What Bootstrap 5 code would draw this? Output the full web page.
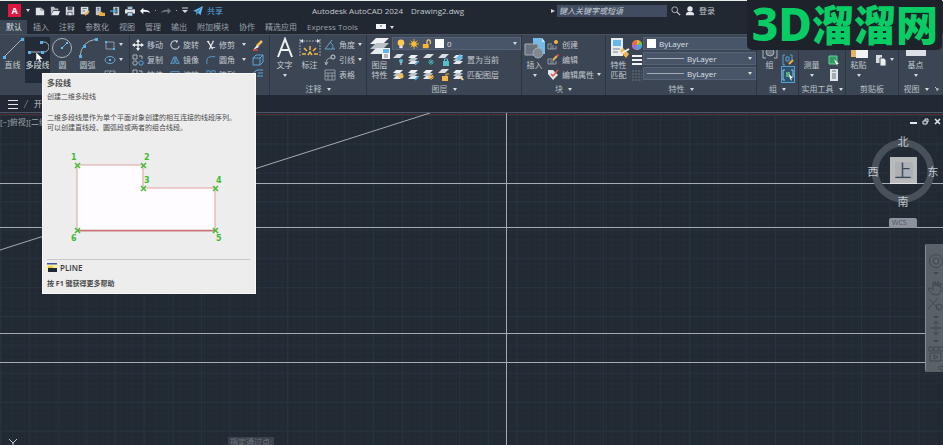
<!DOCTYPE html>
<html lang="zh-CN">
<head>
<meta charset="utf-8">
<meta name="viewport" content="width=device-width, initial-scale=1">
<title>Autodesk AutoCAD 2024 - Drawing2.dwg</title>
<link href="https://cdn.jsdelivr.net/npm/bootstrap@5.3.0/dist/css/bootstrap.min.css" rel="stylesheet">
<style>
body{font-family:"Open Sans","Noto Sans CJK SC",sans-serif;font-size:8px;line-height:10px;color:#c3c9cf;background:#222933;overflow:hidden}
button,.ribbon a{background:none;border:0;padding:0;color:inherit;font-size:8px;line-height:10px;text-decoration:none;white-space:nowrap}
svg{display:block;flex:none}
.i9{width:10px;height:10px}.i12{width:12px;height:12px}.i24{width:22px;height:22px}
.titlebar{display:grid;grid-template-columns:312fr 239fr 392fr;height:20px;border-top:1px solid #e4efe9;background:#222832}
.qat{gap:5px;padding-left:8px}
.logo{background:#df1740;color:#fff;width:13px;height:13px;font-weight:700;font-size:9px;line-height:13px;text-align:center}
.tri{width:0;height:0;border:2px solid transparent;border-top:3px solid #d6dade;border-bottom:0;flex:none}
.dot{width:1px;height:1px;background:#99a1aa}
.share{color:#51a4dd}
.search{width:110px;height:12px;background:#414c60;border:0;color:#c6ccd4;font-size:8px;font-style:italic;padding:0 2px;border-radius:0}
.search::placeholder{color:#c6ccd4}
.tabs{height:14px;gap:10px;background:#222832;color:#9aa2ab}
.tabs a{color:inherit;text-decoration:none;line-height:14px;white-space:nowrap}
.tabs a.active{background:#3b4553;color:#dce0e4;padding:0 5px 0 6px;margin-right:-4px}
.ribbon{display:grid;grid-template-columns:130fr 140fr 97fr 155fr 84fr 151fr 42fr 47fr 53fr 44fr;background:#3b4553;border-top:1px solid #46505e;height:61px}
.panel{min-width:0;border-right:1px solid #2c3541;display:flex;flex-direction:column}
.tools{height:48px;padding-top:2px;display:flex;overflow:hidden}
.foot{height:12px;gap:5px;color:#b9c0c7}
.big{display:flex;flex-direction:column;align-items:center;width:25px;height:46px;flex:none}
.big .i24{margin-bottom:1px}
.big.on{background:#222b37;color:#dde2e6}
.stack{display:grid;grid-template-rows:repeat(3,15px);row-gap:0;min-width:0}
.line{display:flex;align-items:center;gap:3px;height:15px}
.mod{display:grid;grid-template-columns:38px 36px 46px 12px;grid-auto-rows:15px;padding-left:2px}
.note{padding-left:2px}
.note .stack{padding-left:2px}
.drop{display:flex;align-items:center;height:13px;background:#485468;border:1px solid #566277;padding:0 3px;gap:3px;min-width:0}
.drop select{appearance:none;background:none;border:0;color:#dce1e6;font-size:8px;line-height:10px;padding:0;flex:1;min-width:0}
.sw{width:9px;height:9px;background:#fff;flex:none}
.rule{width:37px;height:1px;background:#a6afb9;flex:none}
.hot{outline:1px solid #55a0d2;background:#2c5471}
.files{height:17px;background:#222934;padding-left:8px;gap:5px}
.files span{color:#68727e}
.canvas{position:relative;min-height:0;border-top:1px solid #4a5664;background:#212932;overflow:hidden}
.model{width:100%;height:100%}
.over{position:absolute}
.viewname{left:0;top:4px;color:#9ba4aa;width:42px;overflow:hidden;white-space:nowrap}
.win{right:2px;top:5px;gap:5px}
.cube{right:2px;top:21px}
.cube text{font-family:"Liberation Serif","Noto Sans CJK SC",serif}
.navi{right:0;top:131px;width:18px;height:128px;background:#5b6168;color:#41484f;border-left:1px solid #858b90;border-radius:2px 0 0 2px}
.wcs{right:26px;top:105px;width:28px;height:10px;background:#8d939d;color:#4f5864;border-radius:2px;padding-left:3px;font-size:7px}
.prompt{left:228px;bottom:-2px;background:#3a414b;color:#6d747d;padding:0 2px}
.tip{left:42px;top:73px;width:214px;height:221px;background:#ededed;color:#4b4b4b;padding:4px 5px 4px 4px;border:1px solid #f8f8f8;font-size:7px;z-index:4;line-height:10px}
.tip h1{font-size:8px;line-height:10px;font-weight:700;margin:0 0 4px}
.tip p{margin:0;white-space:nowrap}
.tip .desc{margin-top:11px}
.tip .cmd{border-top:1px solid #c8c8c8;font-size:8px;font-weight:600;height:16px;gap:3px;color:#3a3a3a}
.brand{right:1px;top:0;height:50px;padding:0 4px 0 5px;background:#1d222b;border-radius:0 0 5px 5px;color:#08cd65;font-family:"Noto Sans","Noto Sans CJK SC",sans-serif;font-weight:900;font-size:42px;line-height:50px;z-index:5;white-space:nowrap}
.brand b{font-size:46px;font-weight:800;line-height:40px}
.pointer{left:36px;top:52px;z-index:6}
</style>
<script src="https://cdn.jsdelivr.net/npm/bootstrap@5.3.0/dist/js/bootstrap.bundle.min.js"></script>
</head>
<body class="vh-100 d-flex flex-column">
<svg width="0" height="0" class="position-absolute" aria-hidden="true">
<defs>
<g id="stackg"><path d="M4 1h7L8 4H1z" fill="#eef1f3"/><path d="M4 4h7L8 7H1z" fill="#b8c1c9"/><path d="M4 7h7L8 10H1z" fill="#e4e8eb"/></g>
<symbol id="bulb" viewBox="0 0 12 12"><circle cx="6" cy="4.5" r="4" fill="#ffc94f"/><path d="M4 8h4v3H4z" fill="#e2e5e7"/></symbol>
<symbol id="sun" viewBox="0 0 12 12"><circle cx="6" cy="6" r="3.2" fill="#ffb92d"/><path d="M6 0v12M0 6h12M2 2l8 8M10 2l-8 8" stroke="#ffb92d"/></symbol>
<symbol id="lock" viewBox="0 0 12 12"><path d="M1 6h7v5H1z" fill="#ffb62f"/><path d="M6 6V3q0-2 2-2t2 2v3" fill="none" stroke="#ffd078" stroke-width="1.4"/></symbol>
<symbol id="blk" viewBox="0 0 12 12"><path d="M1 5h4M1 5v5h8V7M3 7h4M3 9h4" fill="none" stroke="#929ca6"/><circle cx="9" cy="3" r="2" fill="#f3b640"/></symbol>
<symbol id="blked" viewBox="0 0 12 12"><path d="M1 5h4M1 5v5h8V7M3 7h4M3 9h4" fill="none" stroke="#929ca6"/><path d="M6 6l4-4" stroke="#f0b452" stroke-width="2"/><path d="M10 2l1.5-1.5" stroke="#e14e44" stroke-width="2"/></symbol>
<symbol id="brush" viewBox="0 0 12 12"><path d="M5 7l5-5" stroke="#f6bc51" stroke-width="2.5"/><path d="M1 11l4-5 2 2z" fill="#f4eee5"/><path d="M1 11h5" stroke="#e3493f" stroke-width="1.5"/></symbol>
<symbol id="paper" viewBox="0 0 12 12"><path d="M1 2h6l4 3v6H1z" fill="#dfe3e6"/><path d="M7 2v3h4" fill="none" stroke="#78818b"/></symbol>
<symbol id="floppy" viewBox="0 0 12 12"><path d="M1 1h10v10H1z" fill="#d7dce0"/><path d="M3 1h6v4H3zM3 7h6v4H3z" fill="#4c5663"/><path d="M4 8h4v3H4z" fill="#e8ebed"/></symbol>
<symbol id="undo" viewBox="0 0 12 12"><path d="M0 6l4-4v2.500q7 0 8 4-3-2-8-1.500V10z" fill="currentColor"/></symbol>
<symbol id="refresh" viewBox="0 0 12 12"><path d="M7 1A5 5 0 1 0 11 7" fill="none" stroke="#c6cfd6" stroke-width="1.300"/><path d="M6 0l4 1-2 3z" fill="#c6cfd6"/></symbol>
<symbol id="copyi" viewBox="0 0 12 12"><path d="M1 1h4v4H1zM7 2h3v3" fill="none" stroke="#abb5be"/><circle cx="3" cy="9" r="2.200" fill="none" stroke="#abb5be"/><circle cx="9" cy="9" r="2.200" fill="none" stroke="#55a9df"/></symbol>
<symbol id="boxi" viewBox="0 0 12 12"><path d="M1 2h10v8H1z" fill="none" stroke="#61a9d5"/></symbol>
<symbol id="cliph" viewBox="0 0 12 12"><path d="M1 1h6v8H1z" fill="#d7dce0"/><path d="M5 4h4l2 2v6H5z" fill="#eceff1" stroke="#4a5562"/></symbol>
</defs>
</svg>

<header class="titlebar">
<div class="qat d-flex align-items-center">
<button class="logo" aria-label="应用程序菜单">A</button><span class="tri"></span>
<button aria-label="新建"><svg class="i9"><use href="#paper"/></svg></button>
<button aria-label="打开"><svg class="i9" viewBox="0 0 12 12"><path d="M1 10V1h4l1 2h4v2H4z" fill="#b4bdc5"/><path d="M4 6h8l-2 5H1z" fill="#e4e8eb"/></svg></button>
<button aria-label="保存"><svg class="i9"><use href="#floppy"/></svg></button>
<button aria-label="另存为"><svg class="i9" viewBox="0 0 12 12"><path d="M1 1h9v9H1z" fill="#d7dce0"/><path d="M3 3h5M3 6h3" stroke="#56616d"/><path d="M6 11l5-5" stroke="#efaf4b" stroke-width="2"/></svg></button>
<button aria-label="从 Web 打开"><svg class="i9" viewBox="0 0 12 12"><path d="M1 1h6v10H1z" fill="#bdc6ce"/><path d="M3 3h2M3 5h2" stroke="#49525d"/><path d="M5 7h3l1 1h3v4H5z" fill="#e8ad3d"/></svg></button>
<button aria-label="保存到 Web"><svg class="i9" viewBox="0 0 12 12"><path d="M4 1h7v10H4z" fill="#c7cdd2"/><path d="M6 2h3v7H6z" fill="#4b5866"/><path d="M0 6h7M5 4l2 2-2 2" stroke="#4cabe5" stroke-width="1.5" fill="none"/></svg></button>
<button aria-label="打印"><svg class="i9" viewBox="0 0 12 12"><path d="M0 4h12v5H0z" fill="#e0e4e7"/><path d="M3 1h6v3H3zM3 8h6v4H3z" fill="#b8dbef" stroke="#52606e"/></svg></button>
<button aria-label="放弃" class="text-light"><svg class="i9"><use href="#undo"/></svg></button><span class="dot"></span>
<button aria-label="重做" class="text-secondary"><svg class="i9" viewBox="0 0 12 12"><path d="M12 6L8 2v2.500q-7 0-8 4 3-2 8-1.500V10z" fill="currentColor"/></svg></button><span class="dot"></span>
<button aria-label="自定义"><svg width="6" height="8" viewBox="0 0 6 8"><path d="M0 1h6" stroke="#d6dade"/><path d="M0 3h6L3 6z" fill="#d6dade"/></svg></button>
<button class="share d-flex align-items-center gap-1"><svg class="i9" viewBox="0 0 12 12"><path d="M0 6L12 0 9 11 6 8l-2 3V7z" fill="#65b9ed"/><path d="M4 7l6-5-4 6" fill="#2878aa"/></svg>共享</button>
</div>
<div class="d-flex align-items-center gap-2 text-nowrap"><span>Autodesk AutoCAD 2024</span><span>Drawing2.dwg</span></div>
<div class="d-flex align-items-center">
<svg width="6" height="6" viewBox="0 0 6 6"><path d="M0 1l4 2-4 2z" fill="#d0d5da"/></svg>
<input class="search" type="search" aria-label="搜索" placeholder="键入关键字或短语">
<button class="ms-1" aria-label="查找"><svg class="i9" viewBox="0 0 12 12"><circle cx="4.500" cy="4.500" r="3.500" fill="none" stroke="#c3c9ce"/><path d="M7 7l4 4" stroke="#c3c9ce" stroke-width="1.500"/></svg></button>
<button class="ms-1 d-flex align-items-center gap-1"><svg class="i9" viewBox="0 0 12 12"><circle cx="6" cy="3.500" r="3.200" fill="#e4e7ea"/><path d="M1 11q0-4 5-4t5 4z" fill="#e4e7ea"/></svg>登录</button>
</div>
</header>

<nav class="tabs d-flex align-items-center" aria-label="功能区选项卡">
<a href="#" class="active">默认</a><a href="#">插入</a><a href="#">注释</a><a href="#">参数化</a><a href="#">视图</a><a href="#">管理</a><a href="#">输出</a><a href="#">附加模块</a><a href="#">协作</a><a href="#">精选应用</a><a href="#">Express Tools</a>
<button class="d-flex align-items-center gap-1 ms-2" aria-label="最小化功能区"><svg width="10" height="6"><path d="M0 0h10v5H0z" fill="#f1f3f5"/><path d="M4 2h2" stroke="#4d5762"/></svg><span class="tri"></span></button>
</nav>

<main class="ribbon">
<section class="panel"><div class="tools">
<button class="big"><svg class="i24" viewBox="0 0 22 22"><path d="M2 20L20 2" stroke="#a9b3bc"/><path d="M1 19h3v3H1zM19 1h3v3h-3z" fill="#58b1e9"/></svg>直线</button>
<button class="big on"><svg class="i24" viewBox="0 0 22 22"><path d="M2 15h15a5 5 0 0 0 0-10h-3" stroke="#a9b3bc" fill="none"/><path d="M1 14h3v3H1zM13 4h3v3h-3zM14 14h3v3h-3z" fill="#58b1e9"/></svg>多段线</button>
<button class="big"><svg class="i24" viewBox="0 0 22 22"><circle cx="10" cy="11" r="9.500" fill="none" stroke="#a9b3bc"/><path d="M10 11l5-5" stroke="#58b1e9"/><path d="M9 10h2v2H9zM14 5h2v2h-2z" fill="#6fc0ef"/></svg>圆<span class="tri mt-1"></span></button>
<button class="big"><svg class="i24" viewBox="0 0 22 22"><path d="M3 20Q4 4 20 2" fill="none" stroke="#a9b3bc"/><path d="M2 18h3v3H2zM6 8h3v3H6zM18 1h3v3h-3z" fill="#58b1e9"/></svg>圆弧<span class="tri mt-1"></span></button>
<div class="stack ps-1"><button class="line" aria-label="矩形"><svg class="i12" viewBox="0 0 12 12"><path d="M2 3h8v7H2z" fill="none" stroke="#909ba5"/><path d="M1 2h2v2H1zM9 9h2v2H9z" fill="#5cb3e5"/></svg><span class="tri"></span></button><button class="line" aria-label="椭圆"><svg class="i12" viewBox="0 0 12 12"><ellipse cx="6" cy="6" rx="5" ry="3.500" fill="none" stroke="#64a8d1"/><path d="M5 5h2v2H5z" fill="#64b9ea"/></svg><span class="tri"></span></button><button class="line" aria-label="图案填充"><svg class="i12" viewBox="0 0 12 12"><path d="M1 2h10v9H1zM1 8l6-6M3 11l8-8" fill="none" stroke="#8899a7"/></svg><span class="tri"></span></button></div>
</div><div class="foot"></div></section>

<section class="panel"><div class="tools mod">
<button class="line"><svg class="i12" viewBox="0 0 12 12"><path d="M6 1v10M1 6h10" stroke="#edf0f2" stroke-width="1.300"/><path d="M6 0l2 3H4zM6 12l2-3H4zM0 6l3-2v4zM12 6L9 4v4z" fill="#edf0f2"/></svg>移动</button><button class="line"><svg class="i9"><use href="#refresh"/></svg>旋转</button><button class="line"><svg class="i9" viewBox="0 0 12 12"><path d="M2 1l6 10M9 1L4 11" stroke="#e3e6e9" stroke-width="1.500"/><path d="M1 2h3M7 9h4" stroke="#e3e6e9"/></svg>修剪<span class="tri ms-1"></span></button><button class="line" aria-label="删除"><svg class="i12"><use href="#brush"/></svg></button>
<button class="line"><svg class="i12"><use href="#copyi"/></svg>复制</button><button class="line"><svg class="i9" viewBox="0 0 12 12"><path d="M5 2v8H1zM7 2l4 8H7z" fill="none" stroke="#61aee0"/></svg>镜像</button><button class="line"><svg class="i9" viewBox="0 0 12 12"><path d="M1 11V7q0-5 6-5h4" fill="none" stroke="#5da8dc"/></svg>圆角<span class="tri ms-1"></span></button><button class="line" aria-label="分解"><svg class="i12" viewBox="0 0 12 12"><path d="M1 4h7v7H1zM1 4l3-3h7L8 4M11 1v7l-3 3" fill="none" stroke="#5ca9da"/></svg></button>
<button class="line"><svg class="i12"><use href="#copyi"/></svg>拉伸</button><button class="line"><svg class="i9"><use href="#boxi"/></svg>缩放</button><button class="line"><svg class="i9" viewBox="0 0 12 12"><path d="M1 1h4v4H1zM7 1h4v4H7zM1 7h4v4H1zM7 7h4v4H7z" fill="none" stroke="#5da8dc"/></svg>阵列<span class="tri ms-1"></span></button><button class="line" aria-label="偏移"><svg class="i12" viewBox="0 0 12 12"><path d="M11 1H5q-4 2-4 5M11 4H6M11 7H5" fill="none" stroke="#5ca9da"/></svg></button>
</div><div class="foot"></div></section>

<section class="panel"><div class="tools note">
<button class="big"><svg class="i24" viewBox="0 0 22 22"><path d="M4 20L11 2l7 18M7 13h8" fill="none" stroke="#f0f2f4" stroke-width="2"/></svg>文字<span class="tri mt-1"></span></button>
<button class="big"><svg class="i24" viewBox="0 0 22 22"><path d="M1 2v18M21 2v18M1 4h20" fill="none" stroke="#9aa5af" stroke-dasharray="2 1"/><path d="M1 4l3-2v4zM21 4l-3-2v4z" fill="#dce1e5"/><path d="M11 9v4M5 11l3 3M17 11l-3 3M3 17h4M15 17h4M9 18l2-3 2 3" stroke="#f2b947" stroke-width="1.500" fill="none"/></svg>标注</button>
<div class="stack"><button class="line"><svg class="i12" viewBox="0 0 12 12"><path d="M8 1L1 10h10" fill="none" stroke="#6fa3c5"/><path d="M6 3q4 3 3 7" fill="none" stroke="#51a7dc"/></svg>角度<span class="tri"></span></button><button class="line"><svg class="i12" viewBox="0 0 12 12"><path d="M2 10q0-6 5-6M1 8l1 3 2-3" fill="none" stroke="#a5b0b9"/><circle cx="9" cy="3" r="2" fill="none" stroke="#cdd3d8"/></svg>引线<span class="tri"></span></button><button class="line"><svg class="i12" viewBox="0 0 12 12"><path d="M1 1h10v10H1zM1 4h10M1 7h10M4 4v7M8 4v7" fill="none" stroke="#8d98a2"/></svg>表格</button></div>
</div><div class="foot d-flex justify-content-center align-items-center">注释<span class="tri"></span></div></section>

<section class="panel"><div class="tools">
<button class="big"><svg class="i24" viewBox="0 0 22 22"><path d="M7 1h13l-6 6H1z" fill="#f0f2f4"/><path d="M7 6h13l-6 6H1z" fill="#b9c1c9"/><path d="M7 11h13l-6 6H1z" fill="#e8ebee"/><path d="M13 11h8v11h-8z" fill="#f2f4f6"/><path d="M14 12h6v4h-6z" fill="#5cb7ed"/><path d="M15 18h4M15 20h4" stroke="#6e7882"/></svg>图层<span>特性</span></button>
<div class="stack flex-grow-1"><div class="drop"><svg class="i9"><use href="#bulb"/></svg><svg class="i9"><use href="#sun"/></svg><svg class="i9"><use href="#lock"/></svg><span class="sw"></span><select aria-label="图层"><option>0</option></select><span class="tri"></span></div>
<div class="line"><button aria-label="关闭图层"><svg class="i12" viewBox="0 0 12 12"><path d="M5 0h7L8 4H1z" fill="#d8dde1"/><circle cx="9" cy="7" r="2" fill="#52bcd0"/><path d="M9 8v3" stroke="#dbe0e3"/></svg></button><button aria-label="隔离"><svg class="i12" viewBox="0 0 12 12"><use href="#stackg"/><path d="M8 11l4-4" stroke="#4da9d8" stroke-width="1.500"/></svg></button><button aria-label="冻结"><svg class="i12" viewBox="0 0 12 12"><path d="M5 0h7L8 4H1z" fill="#d8dde1"/><path d="M9 5v6M6 8h6M7 6l4 4M11 6l-4 4" stroke="#4ca7a9"/></svg></button><button aria-label="锁定"><svg class="i12" viewBox="0 0 12 12"><path d="M5 0h7L8 4H1z" fill="#d8dde1"/><path d="M6 7h6v5H6z" fill="#57bfc9"/><path d="M7.500 7V5h3v2" stroke="#57bfc9" fill="none"/></svg></button><button class="line"><svg class="i12" viewBox="0 0 12 12"><use href="#stackg"/><path d="M4 4l4-4 3 3-4 4z" fill="#66b9e8"/></svg>置为当前</button></div>
<div class="line"><button aria-label="打开所有图层"><svg class="i12" viewBox="0 0 12 12"><use href="#stackg"/><circle cx="9" cy="7" r="2.500" fill="#f3bd51"/></svg></button><button aria-label="取消隔离"><svg class="i12" viewBox="0 0 12 12"><use href="#stackg"/><path d="M8 11l4-4" stroke="#4da9d8" stroke-width="1.500"/></svg></button><button aria-label="解冻"><svg class="i12" viewBox="0 0 12 12"><use href="#stackg"/><path d="M9 5v6M6 8h6M7 6l4 4M11 6l-4 4" stroke="#f0b647"/></svg></button><button aria-label="解锁"><svg class="i12" viewBox="0 0 12 12"><path d="M5 0h7L8 4H1z" fill="#d8dde1"/><path d="M5 7h6v5H5z" fill="#f0b647"/><path d="M9 7V5h3" stroke="#f0b647" fill="none"/></svg></button><button class="line"><svg class="i12" viewBox="0 0 12 12"><use href="#stackg"/><path d="M8 7l3 4" stroke="#f0d7a2" stroke-width="2"/></svg>匹配图层</button></div></div>
</div><div class="foot d-flex justify-content-center align-items-center">图层<span class="tri"></span></div></section>

<section class="panel"><div class="tools">
<button class="big"><svg class="i24" viewBox="0 0 22 22"><path d="M9 1h9l3 4v12H9z" fill="#75bced"/><path d="M18 1v4h3" fill="#c8e5f8"/><path d="M1 7h13v11H1z" fill="#69727d" stroke="#a5aeb6"/><circle cx="14" cy="16" r="5" fill="#7f8994" stroke="#a5aeb6"/></svg>插入<span class="tri mt-1"></span></button>
<div class="stack"><button class="line"><svg class="i12"><use href="#blk"/></svg>创建</button><button class="line"><svg class="i12"><use href="#blked"/></svg>编辑</button><button class="line"><svg class="i12" viewBox="0 0 12 12"><path d="M1 1h5l5 5-5 5-5-6z" fill="#e3e6e8"/><path d="M4 5l2 2 5-6" fill="none" stroke="#df5747" stroke-width="1.500"/></svg>编辑属性<span class="tri"></span></button></div>
</div><div class="foot d-flex justify-content-center align-items-center">块<span class="tri"></span></div></section>

<section class="panel"><div class="tools">
<button class="big"><svg class="i24" viewBox="0 0 22 22"><path d="M3 1h12v18H3z" fill="#e8ebed"/><path d="M5 3h8v6H5z" fill="#68b7ea"/><path d="M5 12h7M5 15h5" stroke="#75808a"/><path d="M12 14l3-3 6 6-3 4z" fill="#edb54b"/><path d="M14 16l7-4" stroke="#f5f5f5" stroke-width="2"/></svg>特性<span>匹配</span></button>
<div class="stack"><div class="line"><svg class="i12" viewBox="0 0 12 12"><circle cx="6" cy="6" r="5" fill="#f3b838"/><path d="M6 6V1a5 5 0 0 0-5 5z" fill="#ef6848"/><path d="M6 6H1a5 5 0 0 0 5 5z" fill="#ab69dd"/><path d="M6 6v5a5 5 0 0 0 5-5z" fill="#3dacdd"/><path d="M6 6h5a5 5 0 0 0-2-4z" fill="#69c854"/></svg></div><div class="line"><svg class="i12" viewBox="0 0 12 12"><path d="M1 2h10M1 6h10M1 10h10" stroke="#f0f2f4" stroke-width="1.800"/></svg></div><div class="line"><svg class="i12" viewBox="0 0 12 12"><path d="M1 2h10M1 5h10M1 8h10M1 11h10" stroke="#68737f" stroke-dasharray="2 1"/></svg></div></div>
<div class="stack flex-grow-1"><div class="drop"><span class="sw"></span><select aria-label="颜色"><option>ByLayer</option></select><span class="tri"></span></div><div class="drop"><span class="rule"></span><select aria-label="线宽"><option>ByLayer</option></select><span class="tri"></span></div><div class="drop"><span class="rule"></span><select aria-label="线型"><option>ByLayer</option></select><span class="tri"></span></div></div>
</div><div class="foot d-flex justify-content-center align-items-center">特性<span class="tri"></span></div></section>

<section class="panel"><div class="tools">
<button class="big"><svg class="i24" viewBox="0 0 22 22"><path d="M6 9H4v12h3M16 9h2v12h-3" fill="none" stroke="#aeb7bf"/><circle cx="11" cy="15" r="4" fill="#69747f" stroke="#a6b0b9"/></svg>组</button>
<div class="stack"><i></i><button class="line" aria-label="编辑组"><svg class="i12" viewBox="0 0 12 12"><path d="M3 1H1v10h2M8 1h2v5M4 3h3v4H4z" fill="none" stroke="#57a5d5"/><path d="M7 10l4-4" stroke="#f0ae50" stroke-width="2"/></svg></button><button class="line hot" aria-label="组选择"><svg class="i12" viewBox="0 0 12 12"><path d="M3 1H1v10h2M9 1h2v7" fill="none" stroke="#9cc6df"/><path d="M4 3h4v5H4z" fill="#55a983"/><path d="M7 5l4 4H9l1 3-2-2z" fill="#fff"/></svg></button></div>
</div><div class="foot d-flex justify-content-center align-items-center">组<span class="tri"></span></div></section>

<section class="panel"><div class="tools">
<button class="big"><svg class="i24" viewBox="0 0 22 22"><path d="M1 4h20v6H1z" fill="#d8dde1"/></svg>测量<span class="tri mt-1"></span></button>
<div class="stack ps-1"><i></i><button class="line" aria-label="快速选择"><svg class="i12" viewBox="0 0 12 12"><path d="M1 2h8v8H1z" fill="#2f9b62" stroke="#63d698"/><path d="M6 5l5 5H9l1 2-2-2z" fill="#fff"/></svg></button><button class="line" aria-label="计算器"><svg class="i12" viewBox="0 0 12 12"><path d="M2 0h8v12H2z" fill="#e3e6e8"/><path d="M4 2h4M4 5h4M4 7h4M4 9h4" stroke="#66707b"/></svg></button></div>
</div><div class="foot d-flex justify-content-center align-items-center text-nowrap">实用工具<span class="tri"></span></div></section>

<section class="panel"><div class="tools">
<button class="big"><svg class="i24" viewBox="0 0 22 22"><path d="M3 3h12v17H3z" fill="#e6b366"/><path d="M8 8h12v13H8z" fill="#f0f2f4"/></svg>粘贴<span class="tri mt-1"></span></button>
<div class="stack ps-1"><i></i><button class="line" aria-label="复制剪裁"><svg class="i12"><use href="#cliph"/></svg><span class="tri"></span></button></div>
</div><div class="foot d-flex justify-content-center align-items-center">剪贴板</div></section>

<section class="panel border-0"><div class="tools ps-1">
<button class="big"><svg class="i24" viewBox="0 0 22 22"><path d="M1 3h20v16H1z" fill="#dce0e4"/></svg>基点<span class="tri mt-1"></span></button>
</div><div class="foot d-flex justify-content-center align-items-center">视图<span class="tri"></span><svg width="5" height="6"><path d="M1 1l3 3M4 2v2H2" stroke="#c2c9cf" fill="none"/></svg></div></section>
</main>

<nav class="files d-flex align-items-center" aria-label="文件选项卡"><button aria-label="文件菜单"><svg width="10" height="10"><path d="M0 1.500h10M0 5.500h10M0 9.500h10" stroke="#e2e6e9"/></svg></button><svg width="6" height="10"><path d="M1 9L5 1" stroke="#68727e"/></svg><button>开始</button></nav>

<section class="canvas flex-grow-1" aria-label="绘图区域">
<svg class="model" viewBox="0 0 943 332" preserveAspectRatio="xMidYMid slice">
<defs><pattern id="fine" width="6" height="6" patternUnits="userSpaceOnUse"><path d="M0 .5h6M.5 0v6" stroke="#242c36" fill="none"/></pattern><pattern id="coarse" width="28.700" height="28.700" patternUnits="userSpaceOnUse"><path d="M0 2.500h29M.5 0v29" stroke="#29333d" fill="none"/></pattern></defs>
<path d="M0 0h943v332H0z" fill="url(#fine)"/><path d="M0 0h943v332H0z" fill="url(#coarse)"/>
<path d="M0 1.500h943" stroke="#542c36"/>
<path d="M0 70.500h943M0 114.500h943M0 220.500h943M0 249.500h943M506.500 0v332" stroke="#a5acb0"/>
<path d="M0 137L430 0" stroke="#a5acb0"/>
<path d="M9 326l4 4 4-4M13 330v2" fill="none" stroke="#c7cdd1"/>
</svg>
<span class="over viewname">[−]俯视][二维线框]</span>
<div class="over win d-flex"><button aria-label="最小化"><svg width="7" height="7"><path d="M0 5h7" stroke="#e7eaed" stroke-width="2"/></svg></button><button aria-label="还原"><svg width="7" height="7"><path d="M1 3h4v3H1zM3 3V1h3v3H5" fill="none" stroke="#e7eaed"/></svg></button><button aria-label="关闭"><svg width="7" height="7"><path d="M1 1l5 5M6 1L1 6" stroke="#e7eaed" stroke-width="1.500"/></svg></button></div>
<svg class="over cube" width="74" height="76" viewBox="0 0 74 76"><circle cx="36" cy="37" r="28" fill="none" stroke="#48505a" stroke-width="7"/><path d="M23 23h27v27H23z" fill="#b8babc"/><path d="M28 28h18v17H28z" fill="#abb1b7"/><path d="M23 49.500h27" stroke="#e2e4e5"/><g fill="#c6cacd" font-size="11" text-anchor="middle"><text x="36" y="12">北</text><text x="36" y="72">南</text><text x="6" y="42">西</text><text x="66" y="42">东</text></g><text x="36" y="43" text-anchor="middle" font-size="17" fill="#3c4754">上</text></svg>
<button class="over wcs text-start">WCS</button>
<nav class="over navi" aria-label="导航栏"><svg width="17" height="128" viewBox="0 0 17 128" fill="none" stroke="currentColor"><circle cx="10" cy="17" r="6.500"/><circle cx="10" cy="17" r="3"/><path d="M8 29h4M8 73h4M8 97h4" stroke-width="2"/><path d="M6 50l-4-5 2-1 3 2V38l2 4v-5l2 5 1-5 1 6 2-4v8l-3 4zM3 55l10 10M12 54L2 65M10 78v12M4 84h12M7 80l3-3 3 3M7 88l3 3 3-3M3 103h4v4H3zM8 103h4v4H8zM13 103h4v4h-4zM4 109h11v8H4zM8 111l4 2-4 2z"/><circle cx="13" cy="63" r="3"/><circle cx="15" cy="124" r="2"/></svg></nav>
<span class="over prompt">指定通过点:</span>
</section>

<aside class="over tip d-flex flex-column" role="tooltip">
<h1>多段线</h1><p>创建二维多段线</p><p class="desc">二维多段线是作为单个平面对象创建的相互连接的线段序列。<br>可以创建直线段、圆弧段或两者的组合线段。</p>
<svg class="mt-3" width="200" height="98" viewBox="0 0 200 98"><path d="M30 16H96V39H168V82H30z" fill="#fefcfe" stroke="#dda1a1"/><path d="M30 81.500H168" stroke="#c57475" stroke-width="1.500"/><path d="M28 14l5 5m0-5l-5 5M94 14l5 5m0-5l-5 5M94 37l5 5m0-5l-5 5M166 37l5 5m0-5l-5 5M28 79l5 5m0-5l-5 5M166 79l5 5m0-5l-5 5" stroke="#46bd35" stroke-width="1.500"/><g fill="#3dbd2d" font-family="DejaVu Sans" font-size="8" font-weight="700"><text x="24" y="11">1</text><text x="97" y="11">2</text><text x="97" y="34">3</text><text x="169" y="34">4</text><text x="169" y="92">5</text><text x="24" y="92">6</text></g></svg>
<div class="cmd d-flex align-items-center mt-auto"><svg width="10" height="10"><path d="M0 0h10v8H0z" fill="#f6f2a2"/><path d="M0 .5h10" stroke="#4054aa" stroke-width="2"/><path d="M1 5h9v4H1z" fill="#202831"/><path d="M1 4h5" stroke="#edcc36" stroke-width="2"/></svg>PLINE</div><p class="fw-bold mt-1">按 F1 键获得更多帮助</p>
</aside>
<svg class="over pointer" width="8" height="11" aria-hidden="true"><path d="M0 0v9l2-2 2 4 1.500-1-1.500-3H7z" fill="#fff" stroke="#313a45" stroke-width=".5"/></svg>
<div class="over brand"><b>3D</b>溜溜网</div>
</body>
</html>
